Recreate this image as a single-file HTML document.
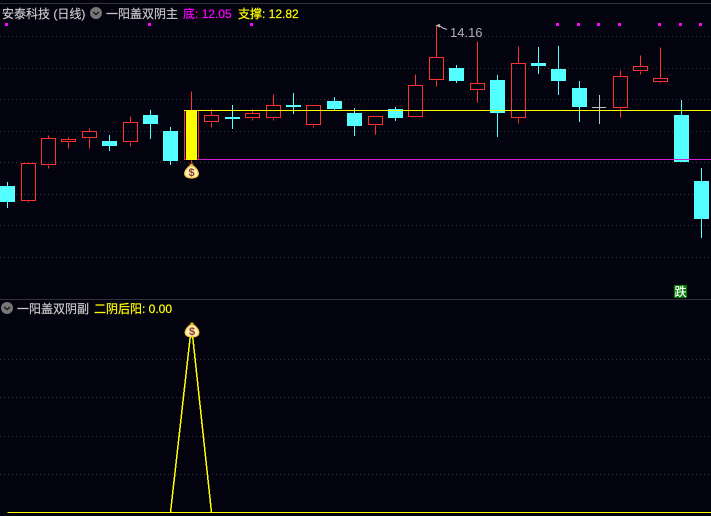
<!DOCTYPE html>
<html><head><meta charset="utf-8"><style>
html,body{margin:0;padding:0;background:#03030f;width:711px;height:516px;overflow:hidden}
svg{display:block}
text{font-family:"Liberation Sans","Noto Sans CJK SC",sans-serif;font-size:12px}
.t{stroke-width:.2px}
</style></head><body>
<svg width="711" height="516" viewBox="0 0 711 516" xmlns="http://www.w3.org/2000/svg">
<defs>
<g id="bag">
<path d="M-2 0.500h4l-.8 2.700h-2.400z" fill="#f0b828" stroke="#4a2a10" stroke-width=".7"/>
<path d="M-1.800 3C-5 5.500-6.800 8-6.800 10.500c0 3 2.800 4.500 6.800 4.500s6.800-1.500 6.800-4.500C6.800 8 5 5.500 1.800 3z" fill="#fff0b0" stroke="#f4c440" stroke-width="1.300"/>
<text x="0" y="13" text-anchor="middle" style="font-size:11px;font-weight:bold" fill="#8a3a30">$</text>
</g>
</defs>
<rect width="711" height="516" fill="#03030f"/>
<g shape-rendering="crispEdges">
<path d="M0 3.500H711M0 299.500H711" stroke="#333" fill="none"/>
<path d="M0 36.500H711M0 68.500H711M0 99.500H711M0 131.500H711M0 162.500H711M0 194.500H711M0 225.500H711M0 257.500H711M0 359.500H711M0 397.500H711M0 436.500H711M0 474.500H711" stroke="#363636" stroke-dasharray="1 3" fill="none"/>

<path fill="#ff00ff" d="M5 23h3v3h-3zM148 23h3v3h-3zM250 23h3v3h-3zM556 23h3v3h-3zM577 23h3v3h-3zM597 23h3v3h-3zM618 23h3v3h-3zM658 23h3v3h-3zM679 23h3v3h-3zM699 23h3v3h-3z"/>

<g transform="translate(.5 .5)" fill="none" stroke="#ff3232">
<path d="M21 163h14v37h-14zM28 162v1M28 201v1M41 138h14v26h-14zM48 135v3M48 165v3M61 139h14v2h-14zM68 137v2M68 142v6M82 131h14v6h-14zM89 128v3M89 138v10M123 122h14v19h-14zM130 116v6M130 142v4M204 115h14v6h-14zM211 109v6M211 122v5M245 113h14v4h-14zM252 109v4M252 118v2M266 105h14v12h-14zM273 94v11M273 118v2M306 105h14v19h-14zM313 125v2M368 116h14v8h-14zM375 125v9M408 85h14v31h-14zM415 74v11M429 57h14v22h-14zM436 25v32M436 80v6M470 83h14v6h-14zM477 41v42M477 90v12M511 63h14v54h-14zM518 46v17M518 118v5M613 76h14v31h-14zM620 70v6M620 108v9M633 66h14v4h-14zM640 55v11M640 71v3M653 78h14v3h-14zM660 47v31M660 82v1"/>
<path d="M191 91v19M191 160v3M184 110h14v49h-14z"/>
</g>
<rect x="186" y="110" width="11" height="50" fill="#ffff00"/>

<g fill="#54ffff">
<path d="M7 182h1v26h-1zM109 135h1v16h-1zM150 110h1v29h-1zM170 127h1v38h-1zM232 105h1v24h-1zM293 93h1v21h-1zM334 97h1v13h-1zM354 108h1v28h-1zM395 107h1v14h-1zM456 65h1v18h-1zM497 75h1v62h-1zM538 47h1v27h-1zM558 46h1v49h-1zM579 81h1v41h-1zM681 100h1v15h-1zM701 168h1v70h-1z"/>
<path d="M0 186h15v16h-15zM102 141h15v5h-15zM143 115h15v9h-15zM163 131h15v30h-15zM225 117h15v2h-15zM286 105h15v2h-15zM327 101h15v8h-15zM347 113h15v13h-15zM388 109h15v9h-15zM449 68h15v13h-15zM490 80h15v33h-15zM531 63h15v3h-15zM551 69h15v12h-15zM572 88h15v19h-15zM674 115h15v47h-15zM694 181h15v38h-15z"/>
</g>
<path fill="#c0c0c0" d="M599 95h1v29h-1zM592 107h14v1h-14z"/>

<rect x="184" y="110" width="527" height="1" fill="#ffff00"/>
<rect x="198" y="159" width="513" height="1" fill="#d020d0"/>

<rect x="674" y="285" width="13" height="13" fill="#007a00"/>
<path transform="translate(.5 .5)" d="M7 512H170H711" fill="none" stroke="#ffff00"/>
<path transform="translate(.5 .5)" d="M170 512L191 325L211 512" fill="none" stroke="#ffff00" stroke-width="1.500"/>
</g>

<use href="#bag" x="191.500" y="163"/>
<use href="#bag" x="192" y="322"/>

<circle cx="96" cy="13" r="6" fill="#777"/>
<path d="M93 12l3 2.500 3-2.500" fill="none" stroke="#222" stroke-width="1.500"/>
<circle cx="7" cy="308" r="6" fill="#777"/>
<path d="M4 307l3 2.500 3-2.500" fill="none" stroke="#222" stroke-width="1.500"/>

<text class="t" stroke="#c8c8c8" x="2" y="18" fill="#c8c8c8">安泰科技 (日线)</text>
<text class="t" stroke="#c8c8c8" x="106" y="18" fill="#c8c8c8">一阳盖双阴主</text>
<text class="t" stroke="#ff00ff" x="183" y="18" fill="#ff00ff">底: 12.05</text>
<text class="t" stroke="#ffff00" x="238" y="18" fill="#ffff00">支撑: 12.82</text>
<text class="t" stroke="#c8c8c8" x="17" y="313" fill="#c8c8c8">一阳盖双阴副</text>
<text class="t" stroke="#ffff00" x="94" y="313" fill="#ffff00">二阴后阳: 0.00</text>
<text x="450" y="37" fill="#b0b0b0" style="font-size:13px">14.16</text>
<text class="t" stroke="#ffffff" x="674.500" y="296" fill="#ffffff">跌</text>
<path d="M440 27l-3-1.500 3-1M437 25.500c2 0 4 1 5 2s3 1 5 2" fill="none" stroke="#c8c8c8" stroke-width="1"/>
</svg>
</body></html>
